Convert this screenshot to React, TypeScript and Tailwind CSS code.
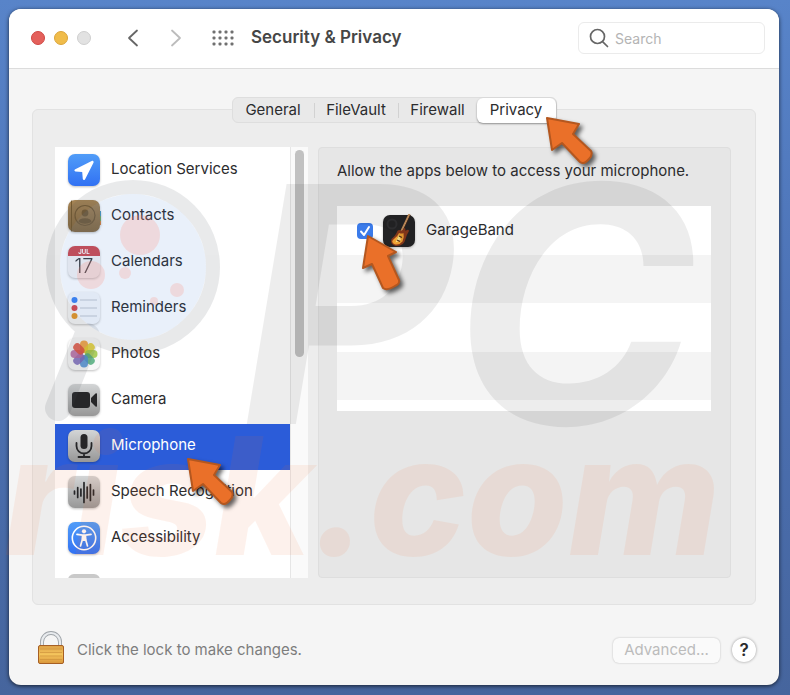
import React from "react";

const Tile = ({ children }: { children: React.ReactNode }) => (
  <svg viewBox="0 0 34 34" className="size-[34px] shrink-0 drop-shadow-[0_1px_1px_rgba(0,0,0,0.25)]" aria-hidden="true">
    <defs>
      <linearGradient id="blueTile" x1="0" y1="0" x2="0" y2="1">
        <stop offset="0" stopColor="#519df8" />
        <stop offset="1" stopColor="#3171f3" />
      </linearGradient>
      <linearGradient id="grayTile" x1="0" y1="0" x2="0" y2="1">
        <stop offset="0" stopColor="#d3d5d6" />
        <stop offset="1" stopColor="#979797" />
      </linearGradient>
      <linearGradient id="brownTile" x1="0" y1="0" x2="0" y2="1">
        <stop offset="0" stopColor="#a58455" />
        <stop offset="1" stopColor="#84683f" />
      </linearGradient>
    </defs>
    {children}
  </svg>
);

const Base = ({ fill }: { fill: string }) => <rect x="1" y="1" width="32" height="32" rx="7" fill={fill} />;

const LocationIcon = () => (
  <Tile>
    <Base fill="url(#blueTile)" />
    <path d="M25.2 7.8 L7.8 16.4 Q6.6 17.8 8.4 18.4 L15.2 19 L15.8 26 Q16.6 28 18 26.4 L26.6 9.4 Q26.8 7.4 25.2 7.8Z" fill="#fff" />
  </Tile>
);

const ContactsIcon = () => (
  <Tile>
    <path d="M31 12h3v5h-3z" fill="#4a93b8" />
    <path d="M31 17h3v5h-3z" fill="#6da55b" />
    <path d="M31 22h3v4h-3z" fill="#cf7d3c" />
    <Base fill="url(#brownTile)" />
    <path d="M4.5 1.6v30.8" stroke="#74592f" strokeWidth="1" />
    <circle cx="18" cy="16.5" r="10" fill="none" stroke="#735a35" strokeWidth="1.2" />
    <circle cx="18" cy="14" r="3.4" fill="#735a35" />
    <path d="M11.5 23 Q12 19.3 18 19.3 Q24 19.3 24.5 23 Q18 26.5 11.5 23Z" fill="#735a35" />
  </Tile>
);

const CalendarIcon = () => (
  <Tile>
    <Base fill="#f5f3f3" />
    <path d="M1 11V8a7 7 0 0 1 7-7h18a7 7 0 0 1 7 7v3z" fill="#cf4a4e" />
    <text x="17" y="8.6" textAnchor="middle" fontSize="6" fontWeight="700" fill="#fff" fontFamily="Inter, sans-serif">JUL</text>
    <text x="17" y="27.5" textAnchor="middle" fontSize="20" fontWeight="300" fill="#3c3c3e" fontFamily="Inter, sans-serif">17</text>
  </Tile>
);

const RemindersIcon = () => (
  <Tile>
    <Base fill="#f7f8fa" />
    {[
      [9, "#3b82f2"],
      [17, "#d6474c"],
      [25, "#e79a2c"],
    ].map(([y, color]) => (
      <g key={y}>
        <circle cx="7.5" cy={y} r="3" fill={String(color)} />
        <path d={`M13 ${y}h17`} stroke="#c2c6cd" strokeWidth="1" />
      </g>
    ))}
  </Tile>
);

const PhotosIcon = () => (
  <Tile>
    <Base fill="#f8f8f8" />
    {["#f19a30", "#e3cf2d", "#9dc644", "#52ad7c", "#4e8fd6", "#7a68bd", "#b667a5", "#e1503d"].map((color, i) => (
      <rect key={color} x="13" y="3.500" width="8" height="12.500" rx="4" fill={color} opacity="0.85" transform={`rotate(${i * 45} 17 17)`} />
    ))}
  </Tile>
);

const CameraIcon = () => (
  <Tile>
    <Base fill="url(#grayTile)" />
    <rect x="5" y="9" width="18" height="16" rx="3" fill="#262628" />
    <path d="M24 15 L28.500 10.5 Q30 9.8 30 11V23Q30 24.2 28.500 23.5L24 19Z" fill="#262628" />
  </Tile>
);

const MicrophoneIcon = () => (
  <Tile>
    <Base fill="url(#grayTile)" />
    <rect x="13.5" y="5" width="7" height="15" rx="3.5" fill="#262628" />
    <path d="M9.5 14v3a7.5 7.5 0 0 0 15 0v-3M17 24.5v3M11.5 28h11" fill="none" stroke="#262628" strokeWidth="1.8" strokeLinecap="round" />
  </Tile>
);

const SpeechIcon = () => (
  <Tile>
    <Base fill="url(#grayTile)" />
    <path d="M7.5 16v3M10.7 12.500v10M13.900 14v7M17 7.500v20M20.200 12v11M23.400 9.500v16M26.500 15v5" stroke="#262628" strokeWidth="1.700" strokeLinecap="round" />
  </Tile>
);

const AccessibilityIcon = () => (
  <Tile>
    <Base fill="url(#blueTile)" />
    <circle cx="17" cy="17" r="11.7" fill="none" stroke="#fff" strokeWidth="1.6" />
    <circle cx="17" cy="10.3" r="2.1" fill="#fff" />
    <path d="M10 13.400 L15.500 14.200h3L24 13.400M15.600 14.500L15.200 19L13.500 25M18.400 14.500L18.800 19L20.500 25" fill="none" stroke="#fff" strokeWidth="1.700" strokeLinecap="round" />
    <path d="M15 14h4v6h-4z" fill="#fff" />
  </Tile>
);

const GarageBandIcon = () => (
  <Tile>
    <Base fill="#242426" />
    <circle cx="10" cy="10" r="4.5" fill="none" stroke="#303033" strokeWidth="2" />
    <path d="M27.500 0 L19 18" stroke="#c8925e" strokeWidth="2" />
    <path d="M28.500 1 L20.500 18" stroke="#3b241b" strokeWidth="0.800" />
    <path d="M17.500 16 Q19.500 18 21.500 15 Q23.500 12.500 23.500 17 Q26.500 14.500 27 17 Q24.500 21 23.500 25 Q22 32.500 13.500 32 Q7.500 30 9.500 25 Q13 22.500 14.500 19 Q15.500 15.500 17.500 16Z" fill="#8a3a1c" />
    <path d="M17 19 Q20 20 21.500 19 Q22.500 23 20.500 27.500 Q16.500 32 12 30 Q8.500 27.500 12 25 Q15.500 22.500 17 19Z" fill="#f0a234" />
    <path d="M17 21 L19 26 L13.500 28.500Z" fill="#fbe58c" />
    <path d="M15 26l3 1.500M17 22l3 1.500" stroke="#53321c" strokeWidth="1.200" />
  </Tile>
);

const items = [
  { name: "Location Services", Icon: LocationIcon },
  { name: "Contacts", Icon: ContactsIcon },
  { name: "Calendars", Icon: CalendarIcon },
  { name: "Reminders", Icon: RemindersIcon },
  { name: "Photos", Icon: PhotosIcon },
  { name: "Camera", Icon: CameraIcon },
  { name: "Microphone", Icon: MicrophoneIcon },
  { name: "Speech Recognition", Icon: SpeechIcon },
  { name: "Accessibility", Icon: AccessibilityIcon },
];

const Pointer = ({ className, steep }: { className: string; steep?: boolean }) => (
  <svg viewBox="0 0 54 62" className={`pointer-events-none absolute z-20 h-[62px] w-[54px] drop-shadow-[3px_3px_2px_rgba(0,0,0,0.6)] ${className}`} aria-hidden="true">
    <path
      d={
        steep
          ? "M7 2 L35 18 L27 22 L38 46 Q39 50 34 52 Q26 57 22 54 L11 30 L2 34Z"
          : "M2 2 L34 8 L28 18 L46 35 Q48 39 44 43 Q39 49 35 46 L17 27 L7 34Z"
      }
      fill="#ea7029"
      stroke="#b4571f"
      strokeWidth="2"
      strokeLinejoin="round"
    />
  </svg>
);

const Watermark = () => (
  <svg viewBox="0 0 790 695" className="pointer-events-none absolute left-0 top-0 z-10 h-[695px] w-[790px]" aria-hidden="true">
    <circle cx="133" cy="267" r="73" fill="#3a73d0" opacity="0.11" />
    <g fill="#ff8a78" opacity="0.22">
      <circle cx="140" cy="235" r="20" />
      <circle cx="91" cy="275" r="14" />
      <circle cx="125" cy="273" r="6" />
      <circle cx="177" cy="290" r="7" />
      <circle cx="154" cy="301" r="4" />
    </g>
    <g opacity="0.12" fill="none" stroke="#4a5058">
      <circle cx="133" cy="267" r="80" strokeWidth="14" />
      <path d="M87 336 L58 408" strokeWidth="26" strokeLinecap="round" />
    </g>
    <g fontFamily="Inter, sans-serif" fontStyle="italic">
      <text x="240" y="424" fontSize="330" fontWeight="700" fill="#000" opacity="0.065">P</text>
      <text x="452" y="424" fontSize="330" fontWeight="700" fill="#000" opacity="0.065">C</text>
      <text x="4" y="555" fontSize="164" fontWeight="800" fill="#f26a2e" opacity="0.085">risk.com</text>
    </g>
  </svg>
);

export default function App() {
  return (
    <div className="relative flex min-h-screen flex-col bg-linear-to-b from-[#5884c9] via-[#4b70b3] to-[#46659d] pt-[9px] pr-[11px] pb-[10px] pl-[9px] font-['Inter','Liberation_Sans',sans-serif] text-[15px] text-[#2c2c2e]">
      <main className="flex flex-1 flex-col rounded-xl bg-[#f5f5f5] shadow-[0_1px_4px_rgba(0,0,0,0.7)]">
        <header className="flex h-[60px] items-center rounded-t-xl border-b border-[#dcdcdc] bg-white pr-[14px] pb-px pl-[22px]">
          <div className="flex gap-[9px]">
            <button aria-label="Close" className="size-[14px] rounded-full border border-[#cf4844] bg-[#e4605b]" />
            <button aria-label="Minimize" className="size-[14px] rounded-full border border-[#dba53b] bg-[#f0bc4a]" />
            <button aria-label="Zoom" className="size-[14px] rounded-full border border-[#cfcfcf] bg-[#e2e2e2]" />
          </div>
          <div className="ml-[36px] flex gap-[31px]">
            <button aria-label="Back">
              <svg viewBox="0 0 12 18" className="h-[18px] w-3" fill="none" stroke="#666" strokeWidth="1.8" strokeLinecap="round" strokeLinejoin="round"><path d="M10 1.500 L2 9 L10 16.500" /></svg>
            </button>
            <button aria-label="Forward">
              <svg viewBox="0 0 12 18" className="h-[18px] w-3" fill="none" stroke="#bcbcbc" strokeWidth="1.8" strokeLinecap="round" strokeLinejoin="round"><path d="M2 1.500 L10 9 L2 16.500" /></svg>
            </button>
          </div>
          <button aria-label="Show all" className="ml-[30px]">
            <svg viewBox="0 0 22 16" className="h-4 w-[22px]" fill="#707070">
              {[2, 8, 14, 20].map((x) => [2, 8, 14].map((y) => <rect key={`${x}-${y}`} x={x - 1.500} y={y - 1.500} width="3" height="3" rx="1" />))}
            </svg>
          </button>
          <h1 className="ml-[17px] text-[17px] font-semibold text-[#464646]">Security &amp; Privacy</h1>
          <div className="ml-auto flex h-8 w-[187px] items-center gap-[6px] rounded-md border border-[#ebebeb] pl-[10px]">
            <svg viewBox="0 0 20 20" className="size-5 shrink-0" fill="none" stroke="#666" strokeWidth="1.700" strokeLinecap="round"><circle cx="8.500" cy="8.500" r="7" /><path d="M13.800 13.800 L18.500 18.500" /></svg>
            <input type="text" aria-label="Search" placeholder="Search" className="min-w-0 flex-1 bg-transparent text-[14px] outline-none placeholder:text-[#b4b4b4]" />
          </div>
        </header>

        <div className="flex flex-1 flex-col pt-7 pr-[23px] pl-[23px]">
          <nav className="relative -mb-[14px] flex h-[26px] items-center self-center rounded-md border border-[#dedede] bg-[#e9e9e9]">
            <button className="w-[81px] text-center">General</button>
            <span className="h-[15px] w-px bg-[#d2d2d2]" />
            <button className="w-[83px] text-center">FileVault</button>
            <span className="h-[15px] w-px bg-[#d2d2d2]" />
            <button className="w-[78px] text-center">Firewall</button>
            <button className="relative h-[25px] w-[79px] rounded-md bg-white text-center shadow-[0_1px_2px_rgba(0,0,0,0.4)]">
              Privacy
              <Pointer className="top-[18px] left-[68px]" />
            </button>
          </nav>

          <section className="flex h-[496px] gap-[10px] rounded-md border border-[#e2e2e2] bg-[#ededed] pt-[37px] pr-6 pb-[26px] pl-[22px]">
            <div className="flex w-[253px] shrink-0 bg-white">
              <div className="h-full flex-1 overflow-hidden pt-px">
                {items.map(({ name, Icon }) => (
                  <button
                    key={name}
                    className={`relative flex h-[46px] w-full items-center gap-[10px] pb-[3px] pl-3 text-left ${name === "Microphone" ? "bg-[#2b5cd9] text-white" : ""}`}
                  >
                    <Icon />
                    <span>{name}</span>
                    {name === "Microphone" && <Pointer className="top-[33px] left-[131px]" />}
                  </button>
                ))}
                <div className="mt-[12px] ml-[13px] h-8 w-8 rounded-md bg-[#c9c9c9]" />
              </div>
              <div className="w-[18px] border-l border-[#e6e6e6] bg-[#fafafa] pt-[3px] pl-1">
                <div className="h-[207px] w-[9px] rounded-full bg-[#c1c1c1]" />
              </div>
            </div>

            <div className="flex-1 rounded-sm border border-[#dedede] bg-[#e6e6e6] pt-[13px] pr-[19px] pl-[18px]">
              <p className="leading-5">Allow the apps below to access your microphone.</p>
              <div className="mt-[25px] h-[205px] overflow-hidden bg-white">
                <label className="flex h-[49px] items-center pl-[20px]">
                  <span className="relative mr-[9px] flex size-4">
                    <input type="checkbox" defaultChecked className="size-4 appearance-none rounded-sm bg-[#3b7bea]" />
                    <svg viewBox="0 0 16 16" className="pointer-events-none absolute inset-0 size-4" fill="none" stroke="#fff" strokeWidth="2" strokeLinecap="round" strokeLinejoin="round"><path d="M4 8.500 L7 12 L12 4" /></svg>
                    <Pointer steep className="top-[11px] left-[4px]" />
                  </span>
                  <GarageBandIcon />
                  <span className="ml-[10px]">GarageBand</span>
                </label>
                <div className="h-12 bg-[#f4f4f4]" />
                <div className="h-[49px]" />
                <div className="h-[48px] bg-[#f4f4f4]" />
              </div>
            </div>
          </section>

          <footer className="flex flex-1 items-center pt-[10px] pl-[5px]">
            <svg viewBox="0 0 28 34" className="mb-1 h-[34px] w-7" aria-hidden="true">
              <defs>
                <linearGradient id="brass" x1="0" y1="0" x2="0" y2="1"><stop offset="0" stopColor="#dca047" /><stop offset="0.500" stopColor="#f4c45c" /><stop offset="1" stopColor="#d9963b" /></linearGradient>
              </defs>
              <path d="M5 16V11a9 9 0 0 1 18 0v5" fill="none" stroke="#9ea3a8" strokeWidth="4" />
              <path d="M5 16V11a9 9 0 0 1 18 0v5" fill="none" stroke="#e8ebee" strokeWidth="2.200" />
              <rect x="1.500" y="14.500" width="25" height="18" rx="1.500" fill="url(#brass)" stroke="#a65f24" />
              <path d="M3 18h22M3 21.500h22M3 25h22M3 28.500h22" stroke="#c98d39" strokeWidth="0.600" />
            </svg>
            <span className="ml-3 text-[#7d7d7d]">Click the lock to make changes.</span>
            <button disabled className="ml-auto h-[25px] w-[107px] rounded-md bg-[#fafafa] text-[#bcbcbc] shadow-[0_0_2px_rgba(0,0,0,0.25)]">Advanced...</button>
            <button aria-label="Help" className="ml-3 size-6 rounded-full bg-white text-[17px] leading-6 font-semibold shadow-[0_0_3px_rgba(0,0,0,0.4)]">?</button>
          </footer>
        </div>
      </main>
      <Watermark />
    </div>
  );
}
